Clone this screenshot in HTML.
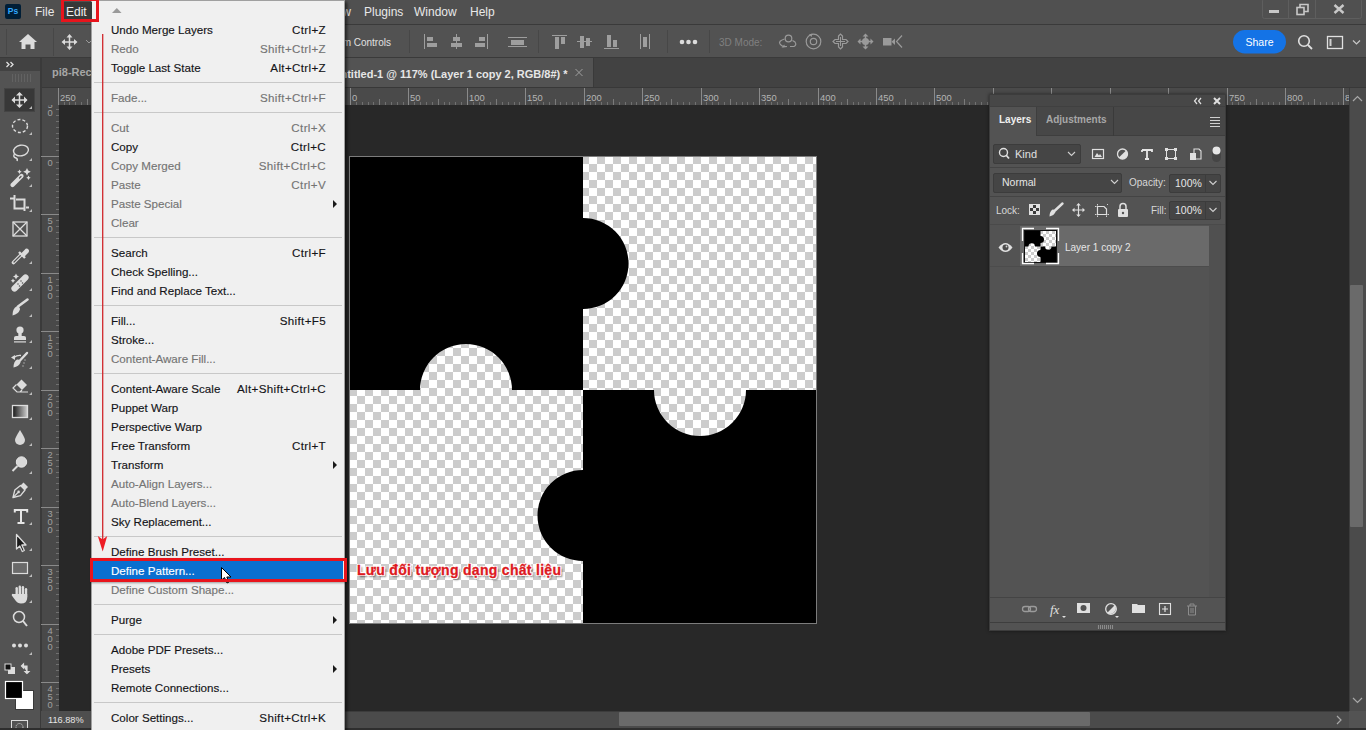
<!DOCTYPE html>
<html><head><meta charset="utf-8">
<style>
*{margin:0;padding:0;box-sizing:border-box}
html,body{width:1366px;height:730px;overflow:hidden;background:#282828;font-family:"Liberation Sans",sans-serif;position:relative}
.a{position:absolute}
svg{position:absolute;overflow:visible}
#menubar{left:0;top:0;width:1366px;height:25px;background:#505050;border-bottom:1px solid #3a3a3a}
#menubar span{position:absolute;top:5px;color:#e8e8e8;font-size:12px}
#opts{left:0;top:25px;width:1366px;height:33px;background:#525252;border-bottom:1px solid #3a3a3a}
#tabs{left:41px;top:58px;width:1325px;height:30px;background:#424242;border-bottom:1px solid #383838}
#tools{left:0;top:58px;width:41px;height:672px;background:#535353;border-right:1px solid #3d3d3d}
#hruler{left:41px;top:88px;width:1308px;height:17px;background:#4a4a4a}
#vruler{left:41px;top:105px;width:18px;height:606px;background:#494949}
#status{left:41px;top:711px;width:1325px;height:17px;background:#535353}
#vscroll{left:1349px;top:88px;width:17px;height:623px;background:#535353}
#menu{left:91px;top:0;width:254px;height:740px;background:#f0f0f0;box-shadow:inset 0 0 0 1px #a0a0a0,2px 2px 3px rgba(0,0,0,.6)}
.mi{position:absolute;left:20px;height:19px;line-height:19px;font-size:11.6px;color:#141418;white-space:nowrap;-webkit-text-stroke:.15px currentColor}
.sc{position:absolute;right:19px;height:19px;line-height:19px;font-size:11.6px;color:#141418;white-space:nowrap;text-align:right;letter-spacing:.35px;-webkit-text-stroke:.15px currentColor}
.dis{color:#747474}
.hlt{color:#fff}
.hl{position:absolute;left:2px;width:250px;height:19px;background:#0a6fd0}
.sep{position:absolute;left:3px;width:248px;height:1px;background:#c8c8c8}
.arr{position:absolute;right:8px;width:0;height:0;border-left:4px solid #1a1a1a;border-top:4px solid transparent;border-bottom:4px solid transparent}
.ic{stroke:#d6d6d6;fill:none;stroke-width:1.5}
.icf{fill:#d6d6d6}
.dim{fill:#8c8c8c}
</style></head><body>
<!-- window buttons -->
<svg width="1366" height="30" style="left:0;top:0;z-index:1">
  <rect x="1262.5" y="-1" width="99" height="19.5" rx="2" fill="none" stroke="#5e5e5e"/>
  <line x1="1288.5" y1="0" x2="1288.5" y2="18" stroke="#5e5e5e"/>
  <line x1="1315.5" y1="0" x2="1315.5" y2="18" stroke="#5e5e5e"/>
  <rect x="1269" y="10" width="10" height="3" fill="#c8c8c8"/>
  <rect x="1297" y="7.5" width="7" height="7" fill="none" stroke="#c8c8c8" stroke-width="1.6"/>
  <path d="M1300,7.5 V4.5 H1308 V11.5 H1304" fill="none" stroke="#c8c8c8" stroke-width="1.6"/>
  <path d="M1334.5,5 L1343.5,13 M1343.5,5 L1334.5,13" stroke="#c8c8c8" stroke-width="2.4"/>
</svg>

<div id="menubar" class="a">
  <div class="a" style="left:5px;top:4px;width:16px;height:15px;background:#001e36;border-radius:2px;color:#31a8ff;font:bold 8.5px 'Liberation Sans';line-height:15px;text-align:center">Ps</div>
  <span style="left:35px">File</span>
  <span style="left:66px">Edit</span>
  <span style="left:325px">View</span>
  <span style="left:364px">Plugins</span>
  <span style="left:414px">Window</span>
  <span style="left:470px">Help</span>
</div>
<div id="opts" class="a"></div>
<svg width="1366" height="60" style="left:0;top:0">
  <!-- left separators -->
  <line x1="6.5" y1="29" x2="6.5" y2="55" stroke="#474747"/>
  <line x1="53.5" y1="28" x2="53.5" y2="56" stroke="#474747"/>
  <!-- home -->
  <path d="M28,34 L37,42 H34.5 V49 H30.5 V44.5 H25.5 V49 H21.5 V42 H19 Z" fill="#dcdcdc"/>
  <!-- move tool -->
  <g stroke="#dcdcdc" stroke-width="1.5" fill="none">
    <line x1="69.5" y1="36" x2="69.5" y2="48"/><line x1="63.5" y1="42" x2="75.5" y2="42"/>
  </g>
  <path d="M69.5,34 L66.5,37.5 H72.5 Z M69.5,50 L66.5,46.5 H72.5 Z M61.5,42 L65,39 V45 Z M77.5,42 L74,39 V45 Z" fill="#dcdcdc"/>
  <path d="M86,40 L89,43 L92,40" stroke="#9a9a9a" fill="none"/>
  <!-- separators -->
  <line x1="409.5" y1="30" x2="409.5" y2="53" stroke="#474747"/>
  <line x1="538.5" y1="30" x2="538.5" y2="53" stroke="#474747"/>
  <line x1="667.5" y1="30" x2="667.5" y2="53" stroke="#474747"/>
  <line x1="709.5" y1="30" x2="709.5" y2="53" stroke="#474747"/>
  <g fill="#9e9e9e">
    <!-- align left -->
    <rect x="424" y="34" width="1" height="15"/><rect x="427" y="37" width="6" height="4"/><rect x="427" y="43" width="10" height="4"/>
    <!-- align h center -->
    <rect x="456" y="34" width="1" height="15"/><rect x="453" y="37" width="7" height="4"/><rect x="451" y="43" width="11" height="4"/>
    <!-- align right -->
    <rect x="487" y="34" width="1" height="15"/><rect x="479" y="37" width="6" height="4"/><rect x="475" y="43" width="10" height="4"/>
    <!-- distribute -->
    <rect x="508" y="37" width="19" height="1"/><rect x="511" y="40" width="13" height="5"/><rect x="508" y="46" width="19" height="1"/>
    <!-- top -->
    <rect x="552" y="35" width="15" height="1"/><rect x="555" y="37" width="4" height="12"/><rect x="561" y="37" width="4" height="7"/>
    <!-- v center -->
    <rect x="577" y="41" width="15" height="1"/><rect x="580" y="36" width="4" height="12"/><rect x="586" y="38" width="4" height="8"/>
    <!-- bottom -->
    <rect x="604" y="48" width="15" height="1"/><rect x="607" y="35" width="4" height="12"/><rect x="613" y="40" width="4" height="7"/>
    <!-- distribute h -->
    <rect x="640" y="34" width="1" height="15"/><rect x="643" y="37" width="4" height="10"/><rect x="649" y="34" width="1" height="15"/>
  </g>
  <g fill="#dcdcdc"><circle cx="682" cy="42" r="2.3"/><circle cx="688.5" cy="42" r="2.3"/><circle cx="695" cy="42" r="2.3"/></g>
  <text x="719" y="45.5" font-size="10" fill="#808080" font-family="Liberation Sans">3D Mode:</text>
  <g stroke="#9a9a9a" stroke-width="1.2" fill="none">
    <circle cx="788.5" cy="38.5" r="3.3"/>
    <path d="M784.5,39 Q778,41 780,44 Q782,47 787,46.5 M790,46.5 H794 Q797,45 795,42 L792.5,40.5"/>
    <circle cx="813.5" cy="41.5" r="7.3"/><circle cx="813.5" cy="41.5" r="3.2"/>
    <path d="M838.5,36 L840.5,34 L842.5,36 V39.5 H846 L848,41.5 L846,43.5 H842.5 V47 L840.5,49 L838.5,47 V43.5 H835 L833,41.5 L835,39.5 H838.5 Z"/>
    <path d="M840.5,37 V46 M836,41.5 H845" stroke-width="1"/>
    <path d="M902,35.5 L896.5,41.5 L902,47.5"/>
  </g>
  <g fill="#9a9a9a">
    <path d="M809,34.5 l3.5,-1 -1,3.5z"/>
    <path d="M865.5,33.5 l3,3 h-6 z M865.5,49.5 l3,-3 h-6 z M857.5,41.5 l3,-3 v6 z M873.5,41.5 l-3,-3 v6 z"/><circle cx="865.5" cy="41.5" r="3.5"/>
    <path d="M865.5,36 V47 M860,41.5 H871" stroke="#9a9a9a" stroke-width="1.5"/>
    <rect x="883" y="38" width="8.5" height="7.5"/><path d="M891.5,41.8 L895,38.5 V45 Z"/>
    <path d="M781.5,47.5 l3,-3 v3 z"/>
  </g>
  <!-- share -->
  <rect x="1233" y="30" width="53" height="23.5" rx="11.75" fill="#1473e6"/>
  <text x="1259.5" y="45.5" font-size="10.5" fill="#fff" text-anchor="middle" font-family="Liberation Sans">Share</text>
  <circle cx="1304" cy="41" r="5.3" fill="none" stroke="#e0e0e0" stroke-width="1.6"/>
  <line x1="1308" y1="45" x2="1312" y2="49" stroke="#e0e0e0" stroke-width="1.8"/>
  <rect x="1327.5" y="36.5" width="15" height="12" fill="none" stroke="#e0e0e0" stroke-width="1.3"/>
  <rect x="1329.5" y="39" width="2" height="7" fill="#d0d0d0"/>
  <path d="M1353,40.5 L1356.5,44 L1360,40.5" fill="none" stroke="#c8c8c8" stroke-width="1.2"/>
  <text x="391" y="45.5" font-size="10" fill="#e0e0e0" text-anchor="end" font-family="Liberation Sans">m Controls</text>
</svg>

<div id="tabs" class="a"></div>
<div id="tools" class="a"></div>
<div id="hruler" class="a"></div>
<div id="vruler" class="a"></div>
<div id="status" class="a"></div>
<div id="vscroll" class="a"></div>
<div class="a" style="left:0;top:58px;width:40px;height:13px;background:#424242"></div>
<svg width="100" height="100" style="left:0;top:0">
  <path d="M6.5,62 L9,64.5 L6.5,67 M10.5,62 L13,64.5 L10.5,67" stroke="#e0e0e0" stroke-width="1.3" fill="none"/>
  <g stroke="#626262" stroke-width="1">
    <line x1="12.5" y1="74" x2="12.5" y2="82"/><line x1="15.5" y1="74" x2="15.5" y2="82"/><line x1="18.5" y1="74" x2="18.5" y2="82"/>
    <line x1="21.5" y1="74" x2="21.5" y2="82"/><line x1="24.5" y1="74" x2="24.5" y2="82"/><line x1="27.5" y1="74" x2="27.5" y2="82"/><line x1="30.5" y1="74" x2="30.5" y2="82"/>
  </g>
</svg>
<div class="a" style="left:40px;top:58px;width:2px;height:672px;background:#3a3a3a"></div>
<div class="a" style="left:52px;top:66px;font:bold 11px 'Liberation Sans';color:#a6a6a6;white-space:nowrap">pi8-Rec</div>
<div class="a" style="left:300px;top:58px;width:294px;height:29px;background:#535353;border-left:1px solid #3a3a3a;border-right:1px solid #3a3a3a"></div>
<div class="a" style="left:332.5px;top:67.5px;font:bold 11px 'Liberation Sans';color:#e6e6e6;white-space:nowrap">Untitled-1 @ 117% (Layer 1 copy 2, RGB/8#) *</div>
<svg width="600" height="100" style="left:0;top:0"><path d="M575.5,69 L582.5,76 M582.5,69 L575.5,76" stroke="#a0a0a0" stroke-width="1"/></svg>

<div class="a" style="left:4px;top:88px;width:31px;height:24px;background:#383838;border:1px solid #444"></div>
<svg width="42" height="730" style="left:0;top:0">
 <g fill="#dcdcdc" stroke="none">
  <!-- corner triangles -->
  <path d="M32,106 V109 H29 Z M32,132 V135 H29 Z M32,158 V161 H29 Z M32,184 V187 H29 Z M32,209 V212 H29 Z M32,261 V264 H29 Z M32,288 V291 H29 Z M32,314 V317 H29 Z M32,340 V343 H29 Z M32,366 V369 H29 Z M32,392 V395 H29 Z M32,417 V420 H29 Z M32,443 V446 H29 Z M32,471 V474 H29 Z M32,497 V500 H29 Z M32,522 V525 H29 Z M32,548 V551 H29 Z M32,574 V577 H29 Z M32,600 V603 H29 Z M32,652 V655 H29 Z" fill="#bdbdbd"/>
 </g>
 <g stroke="#dcdcdc" fill="none" stroke-width="1.5">
  <!-- move -->
  <path d="M19.5,93 V107 M12.5,100 H26.5"/>
 </g>
 <path fill="#dcdcdc" d="M19.5,92 l-3.5,3.5 h7 z M19.5,108 l-3.5,-3.5 h7 z M11.5,100 l3.5,-3.5 v7 z M27.5,100 l-3.5,-3.5 v7 z"/>
 <!-- marquee -->
 <ellipse cx="20" cy="126" rx="7.5" ry="6.5" fill="none" stroke="#dcdcdc" stroke-width="1.4" stroke-dasharray="3 2"/>
 <!-- lasso -->
 <g fill="none" stroke="#dcdcdc" stroke-width="1.4">
  <ellipse cx="21" cy="150.5" rx="7.5" ry="5.3" transform="rotate(-10 21 150.5)"/>
  <path d="M14.5,154 q-2,3 1.5,4 q2,1 1,3"/>
 </g>
 <!-- magic wand -->
 <path d="M12.5,185 L21.5,176" stroke="#dcdcdc" stroke-width="4.2" stroke-linecap="round"/>
 <path d="M19.5,178 L21,176.5" stroke="#535353" stroke-width="1.2" stroke-linecap="round"/>
 <path d="M27,168 l1.2,2.6 2.6,1.2 -2.6,1.2 -1.2,2.6 -1.2,-2.6 -2.6,-1.2 2.6,-1.2z M28.5,175.5 l.8,1.4 1.4,.8 -1.4,.8 -.8,1.4 -.8,-1.4 -1.4,-.8 1.4,-.8z M19.5,169.5 l.8,1.4 1.4,.8 -1.4,.8 -.8,1.4 -.8,-1.4 -1.4,-.8 1.4,-.8z" fill="#dcdcdc"/>
 <!-- crop -->
 <path d="M10,198.5 H15 M14.5,195 V208.5 H24 M16,199.5 H24.5 V211 M26,207.5 H29" fill="none" stroke="#dcdcdc" stroke-width="2"/>
 <!-- frame -->
 <g fill="none" stroke="#dcdcdc" stroke-width="1.3"><rect x="13" y="222" width="14" height="14"/><path d="M13,222 L27,236 M27,222 L13,236"/></g>
 <!-- eyedropper -->
 <path d="M13.5,262.5 L21,255" stroke="#dcdcdc" stroke-width="3.6" fill="none" stroke-linecap="round"/>
 <path d="M14,262 L20.5,255.5" stroke="#535353" stroke-width="1.2" fill="none" stroke-linecap="round"/>
 <path d="M19,252 L25,258" stroke="#dcdcdc" stroke-width="2.4"/>
 <path d="M21.5,253 L24.5,250 Q26.5,247.5 28.5,249.5 Q30,251.5 27.5,253.5 L24.5,256.5 Z" fill="#dcdcdc"/>
 <!-- healing -->
 <path d="M14.5,288.5 L25.5,277.5" stroke="#dcdcdc" stroke-width="6.2" stroke-linecap="round"/>
 <path d="M16,273.5 l1,2 2,1 -2,1 -1,2 -1,-2 -2,-1 2,-1z M13,278.5 l.8,1.5 1.5,.8 -1.5,.8 -.8,1.5 -.8,-1.5 -1.5,-.8 1.5,-.8z" fill="#dcdcdc"/>
 <circle cx="18" cy="284" r=".75" fill="#535353"/><circle cx="21" cy="281" r=".75" fill="#535353"/><circle cx="19.5" cy="286" r=".75" fill="#535353"/><circle cx="22.5" cy="283" r=".75" fill="#535353"/>
 <!-- brush -->
 <path d="M18,306.5 L27.5,299.5" stroke="#dcdcdc" stroke-width="2.6" stroke-linecap="round"/>
 <path d="M12.5,315.5 Q12.5,308.5 16.5,306.5 Q20,306 20,309.5 Q18.5,314 12.5,315.5 Z" fill="#dcdcdc"/>
 <!-- stamp -->
 <circle cx="20" cy="330" r="3.6" fill="#dcdcdc"/><rect x="18.3" y="332" width="3.4" height="4" fill="#dcdcdc"/>
 <path d="M14,340 V337.5 Q14,336 16,336 H24 Q26,336 26,337.5 V340 Z" fill="#dcdcdc"/><rect x="14" y="341.3" width="12" height="1.2" fill="#dcdcdc"/>
 <!-- history brush -->
 <path d="M19.5,361 L27,353" stroke="#dcdcdc" stroke-width="2.4" stroke-linecap="round"/>
 <path d="M13.5,367.5 Q13.5,361.5 17,359.5 Q20.5,359 20.5,362.5 Q19,366.5 13.5,367.5 Z" fill="#dcdcdc"/>
 <path d="M14,357.5 Q17,355 21,355.5" stroke="#dcdcdc" stroke-width="1.3" fill="none"/><path d="M11,357.5 l4,-2.5 v5z" fill="#dcdcdc"/>
 <circle cx="25" cy="360" r=".7" fill="#bbb"/><circle cx="24" cy="363" r=".7" fill="#bbb"/><circle cx="23" cy="366" r=".7" fill="#bbb"/>
 <!-- eraser -->
 <path d="M16.5,384.5 L21.5,379.5 L27,385 L22,390 Z" fill="#dcdcdc"/>
 <path d="M16.5,384.5 L13,388 L17,392 H28 M22,390 L20,392" stroke="#dcdcdc" stroke-width="1.2" fill="none"/>
 <!-- gradient -->
 <defs><linearGradient id="gr" x1="0" y1="0" x2="1" y2="0"><stop offset="0" stop-color="#151515"/><stop offset="1" stop-color="#d0d0d0"/></linearGradient></defs>
 <rect x="12.5" y="405.5" width="15" height="12" fill="url(#gr)" stroke="#dcdcdc" stroke-width="1.3"/>
 <!-- blur drop -->
 <path d="M20,430 Q25,438 25,440 A5,5 0 0 1 15,440 Q15,438 20,430 Z" fill="#d8d8d8"/>
 <!-- dodge -->
 <circle cx="21.5" cy="462" r="5.2" fill="#d8d8d8" stroke="#e6e6e6"/><path d="M17.5,466 L12.5,471" stroke="#dcdcdc" stroke-width="2"/>
 <!-- pen -->
 <path d="M13,497.5 L14.8,490 L20.5,485.5 L25,490 L20.5,495.7 Z" fill="none" stroke="#dcdcdc" stroke-width="1.3" stroke-linejoin="round"/>
 <path d="M20.5,485.5 L23.5,482.5 L28,487 L25,490 Z" fill="#dcdcdc"/>
 <path d="M13,497.5 L18,492.5" stroke="#dcdcdc" stroke-width="1.1"/><circle cx="18.6" cy="491.9" r="1.3" fill="#dcdcdc"/>
 <!-- T -->
 <path d="M14.8,512.5 V510 H27.2 V512.5 M21,510 V523 M17.5,523 H24.5" stroke="#e6e6e6" stroke-width="2" fill="none"/>
 <!-- path select -->
 <path d="M16.5,534.5 L16.5,549 L19.8,546 L22.3,551.5 L24.3,550.5 L21.8,545 L26,545 Z" fill="#1a1a1a" stroke="#dcdcdc" stroke-width="1.3" stroke-linejoin="round"/>
 <!-- rectangle -->
 <rect x="12.5" y="562.5" width="15" height="11" fill="#6a6a6a" stroke="#dcdcdc" stroke-width="1.2"/>
 <!-- hand -->
 <g fill="#dcdcdc">
  <rect x="15.5" y="587" width="2.4" height="10" rx="1.2"/><rect x="18.6" y="585.5" width="2.4" height="11" rx="1.2"/><rect x="21.7" y="586" width="2.4" height="11" rx="1.2"/><rect x="24.8" y="588" width="2.4" height="10" rx="1.2"/>
  <path d="M15.5,594 H27.2 V598 Q27,603.5 21,603.5 Q17.5,603.5 15.5,600.5 L11.8,595.5 Q11.5,593.3 13.5,594 Z"/>
 </g>
 <!-- zoom -->
 <circle cx="19" cy="617" r="5.5" fill="none" stroke="#dcdcdc" stroke-width="1.5"/><path d="M23,621 L27,626" stroke="#dcdcdc" stroke-width="2"/>
 <!-- dots -->
 <circle cx="14" cy="645.5" r="2" fill="#dcdcdc"/><circle cx="20" cy="645.5" r="2" fill="#dcdcdc"/><circle cx="26" cy="645.5" r="2" fill="#dcdcdc"/>
 <!-- default colors -->
 <rect x="8" y="667" width="7" height="7" fill="#dcdcdc"/><rect x="5" y="664" width="6" height="6" fill="#111" stroke="#dcdcdc"/>
 <path d="M23,666 H27 V672 M21.5,666 l2,-2 v4z M27,673.5 l-2,-2 h4z" stroke="#dcdcdc" stroke-width="1.2" fill="#dcdcdc"/>
 <!-- swatches -->
 <rect x="15.5" y="690.5" width="18" height="19" fill="#fff" stroke="#3a3a3a"/>
 <rect x="5.5" y="681.5" width="17" height="17" fill="#000" stroke="#fff" stroke-width="1.2"/>
 <!-- quick mask -->
 <rect x="11.5" y="720.5" width="16" height="12" fill="none" stroke="#dcdcdc" stroke-width="1"/>
 <circle cx="19.5" cy="727" r="3.5" fill="none" stroke="#dcdcdc" stroke-dasharray="1 1"/>
</svg>

<svg width="1366" height="730" style="left:0;top:0;clip-path:inset(88px 17px 625px 41px)">
<line x1="58.5" y1="88" x2="58.5" y2="105" stroke="#8a8a8a" stroke-width="1"/>
<text x="60" y="101" fill="#b4b4b4" font-size="9.4" font-family="Liberation Sans">250</text>
<line x1="64.5" y1="102" x2="64.5" y2="105" stroke="#707070" stroke-width="1"/>
<line x1="69.5" y1="102" x2="69.5" y2="105" stroke="#707070" stroke-width="1"/>
<line x1="75.5" y1="102" x2="75.5" y2="105" stroke="#707070" stroke-width="1"/>
<line x1="81.5" y1="102" x2="81.5" y2="105" stroke="#707070" stroke-width="1"/>
<line x1="87.5" y1="99" x2="87.5" y2="105" stroke="#7a7a7a" stroke-width="1"/>
<line x1="93.5" y1="102" x2="93.5" y2="105" stroke="#707070" stroke-width="1"/>
<line x1="99.5" y1="102" x2="99.5" y2="105" stroke="#707070" stroke-width="1"/>
<line x1="105.5" y1="102" x2="105.5" y2="105" stroke="#707070" stroke-width="1"/>
<line x1="110.5" y1="102" x2="110.5" y2="105" stroke="#707070" stroke-width="1"/>
<line x1="116.5" y1="88" x2="116.5" y2="105" stroke="#8a8a8a" stroke-width="1"/>
<text x="118" y="101" fill="#b4b4b4" font-size="9.4" font-family="Liberation Sans">200</text>
<line x1="122.5" y1="102" x2="122.5" y2="105" stroke="#707070" stroke-width="1"/>
<line x1="128.5" y1="102" x2="128.5" y2="105" stroke="#707070" stroke-width="1"/>
<line x1="134.5" y1="102" x2="134.5" y2="105" stroke="#707070" stroke-width="1"/>
<line x1="140.5" y1="102" x2="140.5" y2="105" stroke="#707070" stroke-width="1"/>
<line x1="145.5" y1="99" x2="145.5" y2="105" stroke="#7a7a7a" stroke-width="1"/>
<line x1="151.5" y1="102" x2="151.5" y2="105" stroke="#707070" stroke-width="1"/>
<line x1="157.5" y1="102" x2="157.5" y2="105" stroke="#707070" stroke-width="1"/>
<line x1="163.5" y1="102" x2="163.5" y2="105" stroke="#707070" stroke-width="1"/>
<line x1="169.5" y1="102" x2="169.5" y2="105" stroke="#707070" stroke-width="1"/>
<line x1="175.5" y1="88" x2="175.5" y2="105" stroke="#8a8a8a" stroke-width="1"/>
<text x="177" y="101" fill="#b4b4b4" font-size="9.4" font-family="Liberation Sans">150</text>
<line x1="181.5" y1="102" x2="181.5" y2="105" stroke="#707070" stroke-width="1"/>
<line x1="186.5" y1="102" x2="186.5" y2="105" stroke="#707070" stroke-width="1"/>
<line x1="192.5" y1="102" x2="192.5" y2="105" stroke="#707070" stroke-width="1"/>
<line x1="198.5" y1="102" x2="198.5" y2="105" stroke="#707070" stroke-width="1"/>
<line x1="204.5" y1="99" x2="204.5" y2="105" stroke="#7a7a7a" stroke-width="1"/>
<line x1="210.5" y1="102" x2="210.5" y2="105" stroke="#707070" stroke-width="1"/>
<line x1="216.5" y1="102" x2="216.5" y2="105" stroke="#707070" stroke-width="1"/>
<line x1="221.5" y1="102" x2="221.5" y2="105" stroke="#707070" stroke-width="1"/>
<line x1="227.5" y1="102" x2="227.5" y2="105" stroke="#707070" stroke-width="1"/>
<line x1="233.5" y1="88" x2="233.5" y2="105" stroke="#8a8a8a" stroke-width="1"/>
<text x="235" y="101" fill="#b4b4b4" font-size="9.4" font-family="Liberation Sans">100</text>
<line x1="239.5" y1="102" x2="239.5" y2="105" stroke="#707070" stroke-width="1"/>
<line x1="245.5" y1="102" x2="245.5" y2="105" stroke="#707070" stroke-width="1"/>
<line x1="251.5" y1="102" x2="251.5" y2="105" stroke="#707070" stroke-width="1"/>
<line x1="256.5" y1="102" x2="256.5" y2="105" stroke="#707070" stroke-width="1"/>
<line x1="262.5" y1="99" x2="262.5" y2="105" stroke="#7a7a7a" stroke-width="1"/>
<line x1="268.5" y1="102" x2="268.5" y2="105" stroke="#707070" stroke-width="1"/>
<line x1="274.5" y1="102" x2="274.5" y2="105" stroke="#707070" stroke-width="1"/>
<line x1="280.5" y1="102" x2="280.5" y2="105" stroke="#707070" stroke-width="1"/>
<line x1="286.5" y1="102" x2="286.5" y2="105" stroke="#707070" stroke-width="1"/>
<line x1="292.5" y1="88" x2="292.5" y2="105" stroke="#8a8a8a" stroke-width="1"/>
<text x="294" y="101" fill="#b4b4b4" font-size="9.4" font-family="Liberation Sans">50</text>
<line x1="297.5" y1="102" x2="297.5" y2="105" stroke="#707070" stroke-width="1"/>
<line x1="303.5" y1="102" x2="303.5" y2="105" stroke="#707070" stroke-width="1"/>
<line x1="309.5" y1="102" x2="309.5" y2="105" stroke="#707070" stroke-width="1"/>
<line x1="315.5" y1="102" x2="315.5" y2="105" stroke="#707070" stroke-width="1"/>
<line x1="321.5" y1="99" x2="321.5" y2="105" stroke="#7a7a7a" stroke-width="1"/>
<line x1="327.5" y1="102" x2="327.5" y2="105" stroke="#707070" stroke-width="1"/>
<line x1="332.5" y1="102" x2="332.5" y2="105" stroke="#707070" stroke-width="1"/>
<line x1="338.5" y1="102" x2="338.5" y2="105" stroke="#707070" stroke-width="1"/>
<line x1="344.5" y1="102" x2="344.5" y2="105" stroke="#707070" stroke-width="1"/>
<line x1="350.5" y1="88" x2="350.5" y2="105" stroke="#8a8a8a" stroke-width="1"/>
<text x="352" y="101" fill="#b4b4b4" font-size="9.4" font-family="Liberation Sans">0</text>
<line x1="356.5" y1="102" x2="356.5" y2="105" stroke="#707070" stroke-width="1"/>
<line x1="362.5" y1="102" x2="362.5" y2="105" stroke="#707070" stroke-width="1"/>
<line x1="368.5" y1="102" x2="368.5" y2="105" stroke="#707070" stroke-width="1"/>
<line x1="373.5" y1="102" x2="373.5" y2="105" stroke="#707070" stroke-width="1"/>
<line x1="379.5" y1="99" x2="379.5" y2="105" stroke="#7a7a7a" stroke-width="1"/>
<line x1="385.5" y1="102" x2="385.5" y2="105" stroke="#707070" stroke-width="1"/>
<line x1="391.5" y1="102" x2="391.5" y2="105" stroke="#707070" stroke-width="1"/>
<line x1="397.5" y1="102" x2="397.5" y2="105" stroke="#707070" stroke-width="1"/>
<line x1="403.5" y1="102" x2="403.5" y2="105" stroke="#707070" stroke-width="1"/>
<line x1="408.5" y1="88" x2="408.5" y2="105" stroke="#8a8a8a" stroke-width="1"/>
<text x="410" y="101" fill="#b4b4b4" font-size="9.4" font-family="Liberation Sans">50</text>
<line x1="414.5" y1="102" x2="414.5" y2="105" stroke="#707070" stroke-width="1"/>
<line x1="420.5" y1="102" x2="420.5" y2="105" stroke="#707070" stroke-width="1"/>
<line x1="426.5" y1="102" x2="426.5" y2="105" stroke="#707070" stroke-width="1"/>
<line x1="432.5" y1="102" x2="432.5" y2="105" stroke="#707070" stroke-width="1"/>
<line x1="438.5" y1="99" x2="438.5" y2="105" stroke="#7a7a7a" stroke-width="1"/>
<line x1="444.5" y1="102" x2="444.5" y2="105" stroke="#707070" stroke-width="1"/>
<line x1="449.5" y1="102" x2="449.5" y2="105" stroke="#707070" stroke-width="1"/>
<line x1="455.5" y1="102" x2="455.5" y2="105" stroke="#707070" stroke-width="1"/>
<line x1="461.5" y1="102" x2="461.5" y2="105" stroke="#707070" stroke-width="1"/>
<line x1="467.5" y1="88" x2="467.5" y2="105" stroke="#8a8a8a" stroke-width="1"/>
<text x="469" y="101" fill="#b4b4b4" font-size="9.4" font-family="Liberation Sans">100</text>
<line x1="473.5" y1="102" x2="473.5" y2="105" stroke="#707070" stroke-width="1"/>
<line x1="479.5" y1="102" x2="479.5" y2="105" stroke="#707070" stroke-width="1"/>
<line x1="484.5" y1="102" x2="484.5" y2="105" stroke="#707070" stroke-width="1"/>
<line x1="490.5" y1="102" x2="490.5" y2="105" stroke="#707070" stroke-width="1"/>
<line x1="496.5" y1="99" x2="496.5" y2="105" stroke="#7a7a7a" stroke-width="1"/>
<line x1="502.5" y1="102" x2="502.5" y2="105" stroke="#707070" stroke-width="1"/>
<line x1="508.5" y1="102" x2="508.5" y2="105" stroke="#707070" stroke-width="1"/>
<line x1="514.5" y1="102" x2="514.5" y2="105" stroke="#707070" stroke-width="1"/>
<line x1="519.5" y1="102" x2="519.5" y2="105" stroke="#707070" stroke-width="1"/>
<line x1="525.5" y1="88" x2="525.5" y2="105" stroke="#8a8a8a" stroke-width="1"/>
<text x="527" y="101" fill="#b4b4b4" font-size="9.4" font-family="Liberation Sans">150</text>
<line x1="531.5" y1="102" x2="531.5" y2="105" stroke="#707070" stroke-width="1"/>
<line x1="537.5" y1="102" x2="537.5" y2="105" stroke="#707070" stroke-width="1"/>
<line x1="543.5" y1="102" x2="543.5" y2="105" stroke="#707070" stroke-width="1"/>
<line x1="549.5" y1="102" x2="549.5" y2="105" stroke="#707070" stroke-width="1"/>
<line x1="555.5" y1="99" x2="555.5" y2="105" stroke="#7a7a7a" stroke-width="1"/>
<line x1="560.5" y1="102" x2="560.5" y2="105" stroke="#707070" stroke-width="1"/>
<line x1="566.5" y1="102" x2="566.5" y2="105" stroke="#707070" stroke-width="1"/>
<line x1="572.5" y1="102" x2="572.5" y2="105" stroke="#707070" stroke-width="1"/>
<line x1="578.5" y1="102" x2="578.5" y2="105" stroke="#707070" stroke-width="1"/>
<line x1="584.5" y1="88" x2="584.5" y2="105" stroke="#8a8a8a" stroke-width="1"/>
<text x="586" y="101" fill="#b4b4b4" font-size="9.4" font-family="Liberation Sans">200</text>
<line x1="590.5" y1="102" x2="590.5" y2="105" stroke="#707070" stroke-width="1"/>
<line x1="595.5" y1="102" x2="595.5" y2="105" stroke="#707070" stroke-width="1"/>
<line x1="601.5" y1="102" x2="601.5" y2="105" stroke="#707070" stroke-width="1"/>
<line x1="607.5" y1="102" x2="607.5" y2="105" stroke="#707070" stroke-width="1"/>
<line x1="613.5" y1="99" x2="613.5" y2="105" stroke="#7a7a7a" stroke-width="1"/>
<line x1="619.5" y1="102" x2="619.5" y2="105" stroke="#707070" stroke-width="1"/>
<line x1="625.5" y1="102" x2="625.5" y2="105" stroke="#707070" stroke-width="1"/>
<line x1="631.5" y1="102" x2="631.5" y2="105" stroke="#707070" stroke-width="1"/>
<line x1="636.5" y1="102" x2="636.5" y2="105" stroke="#707070" stroke-width="1"/>
<line x1="642.5" y1="88" x2="642.5" y2="105" stroke="#8a8a8a" stroke-width="1"/>
<text x="644" y="101" fill="#b4b4b4" font-size="9.4" font-family="Liberation Sans">250</text>
<line x1="648.5" y1="102" x2="648.5" y2="105" stroke="#707070" stroke-width="1"/>
<line x1="654.5" y1="102" x2="654.5" y2="105" stroke="#707070" stroke-width="1"/>
<line x1="660.5" y1="102" x2="660.5" y2="105" stroke="#707070" stroke-width="1"/>
<line x1="666.5" y1="102" x2="666.5" y2="105" stroke="#707070" stroke-width="1"/>
<line x1="671.5" y1="99" x2="671.5" y2="105" stroke="#7a7a7a" stroke-width="1"/>
<line x1="677.5" y1="102" x2="677.5" y2="105" stroke="#707070" stroke-width="1"/>
<line x1="683.5" y1="102" x2="683.5" y2="105" stroke="#707070" stroke-width="1"/>
<line x1="689.5" y1="102" x2="689.5" y2="105" stroke="#707070" stroke-width="1"/>
<line x1="695.5" y1="102" x2="695.5" y2="105" stroke="#707070" stroke-width="1"/>
<line x1="701.5" y1="88" x2="701.5" y2="105" stroke="#8a8a8a" stroke-width="1"/>
<text x="703" y="101" fill="#b4b4b4" font-size="9.4" font-family="Liberation Sans">300</text>
<line x1="706.5" y1="102" x2="706.5" y2="105" stroke="#707070" stroke-width="1"/>
<line x1="712.5" y1="102" x2="712.5" y2="105" stroke="#707070" stroke-width="1"/>
<line x1="718.5" y1="102" x2="718.5" y2="105" stroke="#707070" stroke-width="1"/>
<line x1="724.5" y1="102" x2="724.5" y2="105" stroke="#707070" stroke-width="1"/>
<line x1="730.5" y1="99" x2="730.5" y2="105" stroke="#7a7a7a" stroke-width="1"/>
<line x1="736.5" y1="102" x2="736.5" y2="105" stroke="#707070" stroke-width="1"/>
<line x1="742.5" y1="102" x2="742.5" y2="105" stroke="#707070" stroke-width="1"/>
<line x1="747.5" y1="102" x2="747.5" y2="105" stroke="#707070" stroke-width="1"/>
<line x1="753.5" y1="102" x2="753.5" y2="105" stroke="#707070" stroke-width="1"/>
<line x1="759.5" y1="88" x2="759.5" y2="105" stroke="#8a8a8a" stroke-width="1"/>
<text x="761" y="101" fill="#b4b4b4" font-size="9.4" font-family="Liberation Sans">350</text>
<line x1="765.5" y1="102" x2="765.5" y2="105" stroke="#707070" stroke-width="1"/>
<line x1="771.5" y1="102" x2="771.5" y2="105" stroke="#707070" stroke-width="1"/>
<line x1="777.5" y1="102" x2="777.5" y2="105" stroke="#707070" stroke-width="1"/>
<line x1="782.5" y1="102" x2="782.5" y2="105" stroke="#707070" stroke-width="1"/>
<line x1="788.5" y1="99" x2="788.5" y2="105" stroke="#7a7a7a" stroke-width="1"/>
<line x1="794.5" y1="102" x2="794.5" y2="105" stroke="#707070" stroke-width="1"/>
<line x1="800.5" y1="102" x2="800.5" y2="105" stroke="#707070" stroke-width="1"/>
<line x1="806.5" y1="102" x2="806.5" y2="105" stroke="#707070" stroke-width="1"/>
<line x1="812.5" y1="102" x2="812.5" y2="105" stroke="#707070" stroke-width="1"/>
<line x1="818.5" y1="88" x2="818.5" y2="105" stroke="#8a8a8a" stroke-width="1"/>
<text x="820" y="101" fill="#b4b4b4" font-size="9.4" font-family="Liberation Sans">400</text>
<line x1="823.5" y1="102" x2="823.5" y2="105" stroke="#707070" stroke-width="1"/>
<line x1="829.5" y1="102" x2="829.5" y2="105" stroke="#707070" stroke-width="1"/>
<line x1="835.5" y1="102" x2="835.5" y2="105" stroke="#707070" stroke-width="1"/>
<line x1="841.5" y1="102" x2="841.5" y2="105" stroke="#707070" stroke-width="1"/>
<line x1="847.5" y1="99" x2="847.5" y2="105" stroke="#7a7a7a" stroke-width="1"/>
<line x1="853.5" y1="102" x2="853.5" y2="105" stroke="#707070" stroke-width="1"/>
<line x1="858.5" y1="102" x2="858.5" y2="105" stroke="#707070" stroke-width="1"/>
<line x1="864.5" y1="102" x2="864.5" y2="105" stroke="#707070" stroke-width="1"/>
<line x1="870.5" y1="102" x2="870.5" y2="105" stroke="#707070" stroke-width="1"/>
<line x1="876.5" y1="88" x2="876.5" y2="105" stroke="#8a8a8a" stroke-width="1"/>
<text x="878" y="101" fill="#b4b4b4" font-size="9.4" font-family="Liberation Sans">450</text>
<line x1="882.5" y1="102" x2="882.5" y2="105" stroke="#707070" stroke-width="1"/>
<line x1="888.5" y1="102" x2="888.5" y2="105" stroke="#707070" stroke-width="1"/>
<line x1="893.5" y1="102" x2="893.5" y2="105" stroke="#707070" stroke-width="1"/>
<line x1="899.5" y1="102" x2="899.5" y2="105" stroke="#707070" stroke-width="1"/>
<line x1="905.5" y1="99" x2="905.5" y2="105" stroke="#7a7a7a" stroke-width="1"/>
<line x1="911.5" y1="102" x2="911.5" y2="105" stroke="#707070" stroke-width="1"/>
<line x1="917.5" y1="102" x2="917.5" y2="105" stroke="#707070" stroke-width="1"/>
<line x1="923.5" y1="102" x2="923.5" y2="105" stroke="#707070" stroke-width="1"/>
<line x1="929.5" y1="102" x2="929.5" y2="105" stroke="#707070" stroke-width="1"/>
<line x1="934.5" y1="88" x2="934.5" y2="105" stroke="#8a8a8a" stroke-width="1"/>
<text x="936" y="101" fill="#b4b4b4" font-size="9.4" font-family="Liberation Sans">500</text>
<line x1="940.5" y1="102" x2="940.5" y2="105" stroke="#707070" stroke-width="1"/>
<line x1="946.5" y1="102" x2="946.5" y2="105" stroke="#707070" stroke-width="1"/>
<line x1="952.5" y1="102" x2="952.5" y2="105" stroke="#707070" stroke-width="1"/>
<line x1="958.5" y1="102" x2="958.5" y2="105" stroke="#707070" stroke-width="1"/>
<line x1="964.5" y1="99" x2="964.5" y2="105" stroke="#7a7a7a" stroke-width="1"/>
<line x1="969.5" y1="102" x2="969.5" y2="105" stroke="#707070" stroke-width="1"/>
<line x1="975.5" y1="102" x2="975.5" y2="105" stroke="#707070" stroke-width="1"/>
<line x1="981.5" y1="102" x2="981.5" y2="105" stroke="#707070" stroke-width="1"/>
<line x1="987.5" y1="102" x2="987.5" y2="105" stroke="#707070" stroke-width="1"/>
<line x1="993.5" y1="88" x2="993.5" y2="105" stroke="#8a8a8a" stroke-width="1"/>
<line x1="999.5" y1="102" x2="999.5" y2="105" stroke="#707070" stroke-width="1"/>
<line x1="1005.5" y1="102" x2="1005.5" y2="105" stroke="#707070" stroke-width="1"/>
<line x1="1010.5" y1="102" x2="1010.5" y2="105" stroke="#707070" stroke-width="1"/>
<line x1="1016.5" y1="102" x2="1016.5" y2="105" stroke="#707070" stroke-width="1"/>
<line x1="1022.5" y1="99" x2="1022.5" y2="105" stroke="#7a7a7a" stroke-width="1"/>
<line x1="1028.5" y1="102" x2="1028.5" y2="105" stroke="#707070" stroke-width="1"/>
<line x1="1034.5" y1="102" x2="1034.5" y2="105" stroke="#707070" stroke-width="1"/>
<line x1="1040.5" y1="102" x2="1040.5" y2="105" stroke="#707070" stroke-width="1"/>
<line x1="1045.5" y1="102" x2="1045.5" y2="105" stroke="#707070" stroke-width="1"/>
<line x1="1051.5" y1="88" x2="1051.5" y2="105" stroke="#8a8a8a" stroke-width="1"/>
<line x1="1057.5" y1="102" x2="1057.5" y2="105" stroke="#707070" stroke-width="1"/>
<line x1="1063.5" y1="102" x2="1063.5" y2="105" stroke="#707070" stroke-width="1"/>
<line x1="1069.5" y1="102" x2="1069.5" y2="105" stroke="#707070" stroke-width="1"/>
<line x1="1075.5" y1="102" x2="1075.5" y2="105" stroke="#707070" stroke-width="1"/>
<line x1="1080.5" y1="99" x2="1080.5" y2="105" stroke="#7a7a7a" stroke-width="1"/>
<line x1="1086.5" y1="102" x2="1086.5" y2="105" stroke="#707070" stroke-width="1"/>
<line x1="1092.5" y1="102" x2="1092.5" y2="105" stroke="#707070" stroke-width="1"/>
<line x1="1098.5" y1="102" x2="1098.5" y2="105" stroke="#707070" stroke-width="1"/>
<line x1="1104.5" y1="102" x2="1104.5" y2="105" stroke="#707070" stroke-width="1"/>
<line x1="1110.5" y1="88" x2="1110.5" y2="105" stroke="#8a8a8a" stroke-width="1"/>
<line x1="1116.5" y1="102" x2="1116.5" y2="105" stroke="#707070" stroke-width="1"/>
<line x1="1121.5" y1="102" x2="1121.5" y2="105" stroke="#707070" stroke-width="1"/>
<line x1="1127.5" y1="102" x2="1127.5" y2="105" stroke="#707070" stroke-width="1"/>
<line x1="1133.5" y1="102" x2="1133.5" y2="105" stroke="#707070" stroke-width="1"/>
<line x1="1139.5" y1="99" x2="1139.5" y2="105" stroke="#7a7a7a" stroke-width="1"/>
<line x1="1145.5" y1="102" x2="1145.5" y2="105" stroke="#707070" stroke-width="1"/>
<line x1="1151.5" y1="102" x2="1151.5" y2="105" stroke="#707070" stroke-width="1"/>
<line x1="1156.5" y1="102" x2="1156.5" y2="105" stroke="#707070" stroke-width="1"/>
<line x1="1162.5" y1="102" x2="1162.5" y2="105" stroke="#707070" stroke-width="1"/>
<line x1="1168.5" y1="88" x2="1168.5" y2="105" stroke="#8a8a8a" stroke-width="1"/>
<line x1="1174.5" y1="102" x2="1174.5" y2="105" stroke="#707070" stroke-width="1"/>
<line x1="1180.5" y1="102" x2="1180.5" y2="105" stroke="#707070" stroke-width="1"/>
<line x1="1186.5" y1="102" x2="1186.5" y2="105" stroke="#707070" stroke-width="1"/>
<line x1="1192.5" y1="102" x2="1192.5" y2="105" stroke="#707070" stroke-width="1"/>
<line x1="1197.5" y1="99" x2="1197.5" y2="105" stroke="#7a7a7a" stroke-width="1"/>
<line x1="1203.5" y1="102" x2="1203.5" y2="105" stroke="#707070" stroke-width="1"/>
<line x1="1209.5" y1="102" x2="1209.5" y2="105" stroke="#707070" stroke-width="1"/>
<line x1="1215.5" y1="102" x2="1215.5" y2="105" stroke="#707070" stroke-width="1"/>
<line x1="1221.5" y1="102" x2="1221.5" y2="105" stroke="#707070" stroke-width="1"/>
<line x1="1227.5" y1="88" x2="1227.5" y2="105" stroke="#8a8a8a" stroke-width="1"/>
<text x="1229" y="101" fill="#b4b4b4" font-size="9.4" font-family="Liberation Sans">750</text>
<line x1="1232.5" y1="102" x2="1232.5" y2="105" stroke="#707070" stroke-width="1"/>
<line x1="1238.5" y1="102" x2="1238.5" y2="105" stroke="#707070" stroke-width="1"/>
<line x1="1244.5" y1="102" x2="1244.5" y2="105" stroke="#707070" stroke-width="1"/>
<line x1="1250.5" y1="102" x2="1250.5" y2="105" stroke="#707070" stroke-width="1"/>
<line x1="1256.5" y1="99" x2="1256.5" y2="105" stroke="#7a7a7a" stroke-width="1"/>
<line x1="1262.5" y1="102" x2="1262.5" y2="105" stroke="#707070" stroke-width="1"/>
<line x1="1268.5" y1="102" x2="1268.5" y2="105" stroke="#707070" stroke-width="1"/>
<line x1="1273.5" y1="102" x2="1273.5" y2="105" stroke="#707070" stroke-width="1"/>
<line x1="1279.5" y1="102" x2="1279.5" y2="105" stroke="#707070" stroke-width="1"/>
<line x1="1285.5" y1="88" x2="1285.5" y2="105" stroke="#8a8a8a" stroke-width="1"/>
<text x="1287" y="101" fill="#b4b4b4" font-size="9.4" font-family="Liberation Sans">800</text>
<line x1="1291.5" y1="102" x2="1291.5" y2="105" stroke="#707070" stroke-width="1"/>
<line x1="1297.5" y1="102" x2="1297.5" y2="105" stroke="#707070" stroke-width="1"/>
<line x1="1303.5" y1="102" x2="1303.5" y2="105" stroke="#707070" stroke-width="1"/>
<line x1="1308.5" y1="102" x2="1308.5" y2="105" stroke="#707070" stroke-width="1"/>
<line x1="1314.5" y1="99" x2="1314.5" y2="105" stroke="#7a7a7a" stroke-width="1"/>
<line x1="1320.5" y1="102" x2="1320.5" y2="105" stroke="#707070" stroke-width="1"/>
<line x1="1326.5" y1="102" x2="1326.5" y2="105" stroke="#707070" stroke-width="1"/>
<line x1="1332.5" y1="102" x2="1332.5" y2="105" stroke="#707070" stroke-width="1"/>
<line x1="1338.5" y1="102" x2="1338.5" y2="105" stroke="#707070" stroke-width="1"/>
<line x1="1343.5" y1="88" x2="1343.5" y2="105" stroke="#8a8a8a" stroke-width="1"/>
<text x="1345" y="101" fill="#b4b4b4" font-size="9.4" font-family="Liberation Sans">850</text>
</svg><svg width="1366" height="730" style="left:0;top:0;clip-path:inset(105px 1307px 19px 41px)">
<line x1="56" y1="92.5" x2="59" y2="92.5" stroke="#707070" stroke-width="1"/>
<line x1="41" y1="98.5" x2="59" y2="98.5" stroke="#8a8a8a" stroke-width="1"/>
<text x="47.5" y="107.5" fill="#a0a0a0" font-size="9.3" font-family="Liberation Sans">5</text>
<text x="47.5" y="115.6" fill="#a0a0a0" font-size="9.3" font-family="Liberation Sans">0</text>
<line x1="56" y1="103.5" x2="59" y2="103.5" stroke="#707070" stroke-width="1"/>
<line x1="56" y1="109.5" x2="59" y2="109.5" stroke="#707070" stroke-width="1"/>
<line x1="56" y1="115.5" x2="59" y2="115.5" stroke="#707070" stroke-width="1"/>
<line x1="56" y1="121.5" x2="59" y2="121.5" stroke="#707070" stroke-width="1"/>
<line x1="56" y1="127.5" x2="59" y2="127.5" stroke="#707070" stroke-width="1"/>
<line x1="56" y1="133.5" x2="59" y2="133.5" stroke="#707070" stroke-width="1"/>
<line x1="56" y1="138.5" x2="59" y2="138.5" stroke="#707070" stroke-width="1"/>
<line x1="56" y1="144.5" x2="59" y2="144.5" stroke="#707070" stroke-width="1"/>
<line x1="56" y1="150.5" x2="59" y2="150.5" stroke="#707070" stroke-width="1"/>
<line x1="41" y1="156.5" x2="59" y2="156.5" stroke="#8a8a8a" stroke-width="1"/>
<text x="47.5" y="165.5" fill="#a0a0a0" font-size="9.3" font-family="Liberation Sans">0</text>
<line x1="56" y1="162.5" x2="59" y2="162.5" stroke="#707070" stroke-width="1"/>
<line x1="56" y1="168.5" x2="59" y2="168.5" stroke="#707070" stroke-width="1"/>
<line x1="56" y1="174.5" x2="59" y2="174.5" stroke="#707070" stroke-width="1"/>
<line x1="56" y1="179.5" x2="59" y2="179.5" stroke="#707070" stroke-width="1"/>
<line x1="56" y1="185.5" x2="59" y2="185.5" stroke="#707070" stroke-width="1"/>
<line x1="56" y1="191.5" x2="59" y2="191.5" stroke="#707070" stroke-width="1"/>
<line x1="56" y1="197.5" x2="59" y2="197.5" stroke="#707070" stroke-width="1"/>
<line x1="56" y1="203.5" x2="59" y2="203.5" stroke="#707070" stroke-width="1"/>
<line x1="56" y1="209.5" x2="59" y2="209.5" stroke="#707070" stroke-width="1"/>
<line x1="41" y1="214.5" x2="59" y2="214.5" stroke="#8a8a8a" stroke-width="1"/>
<text x="47.5" y="223.5" fill="#a0a0a0" font-size="9.3" font-family="Liberation Sans">5</text>
<text x="47.5" y="231.6" fill="#a0a0a0" font-size="9.3" font-family="Liberation Sans">0</text>
<line x1="56" y1="220.5" x2="59" y2="220.5" stroke="#707070" stroke-width="1"/>
<line x1="56" y1="226.5" x2="59" y2="226.5" stroke="#707070" stroke-width="1"/>
<line x1="56" y1="232.5" x2="59" y2="232.5" stroke="#707070" stroke-width="1"/>
<line x1="56" y1="238.5" x2="59" y2="238.5" stroke="#707070" stroke-width="1"/>
<line x1="56" y1="244.5" x2="59" y2="244.5" stroke="#707070" stroke-width="1"/>
<line x1="56" y1="250.5" x2="59" y2="250.5" stroke="#707070" stroke-width="1"/>
<line x1="56" y1="255.5" x2="59" y2="255.5" stroke="#707070" stroke-width="1"/>
<line x1="56" y1="261.5" x2="59" y2="261.5" stroke="#707070" stroke-width="1"/>
<line x1="56" y1="267.5" x2="59" y2="267.5" stroke="#707070" stroke-width="1"/>
<line x1="41" y1="273.5" x2="59" y2="273.5" stroke="#8a8a8a" stroke-width="1"/>
<text x="47.5" y="282.5" fill="#a0a0a0" font-size="9.3" font-family="Liberation Sans">1</text>
<text x="47.5" y="290.6" fill="#a0a0a0" font-size="9.3" font-family="Liberation Sans">0</text>
<text x="47.5" y="298.7" fill="#a0a0a0" font-size="9.3" font-family="Liberation Sans">0</text>
<line x1="56" y1="279.5" x2="59" y2="279.5" stroke="#707070" stroke-width="1"/>
<line x1="56" y1="285.5" x2="59" y2="285.5" stroke="#707070" stroke-width="1"/>
<line x1="56" y1="290.5" x2="59" y2="290.5" stroke="#707070" stroke-width="1"/>
<line x1="56" y1="296.5" x2="59" y2="296.5" stroke="#707070" stroke-width="1"/>
<line x1="56" y1="302.5" x2="59" y2="302.5" stroke="#707070" stroke-width="1"/>
<line x1="56" y1="308.5" x2="59" y2="308.5" stroke="#707070" stroke-width="1"/>
<line x1="56" y1="314.5" x2="59" y2="314.5" stroke="#707070" stroke-width="1"/>
<line x1="56" y1="320.5" x2="59" y2="320.5" stroke="#707070" stroke-width="1"/>
<line x1="56" y1="325.5" x2="59" y2="325.5" stroke="#707070" stroke-width="1"/>
<line x1="41" y1="331.5" x2="59" y2="331.5" stroke="#8a8a8a" stroke-width="1"/>
<text x="47.5" y="340.5" fill="#a0a0a0" font-size="9.3" font-family="Liberation Sans">1</text>
<text x="47.5" y="348.6" fill="#a0a0a0" font-size="9.3" font-family="Liberation Sans">5</text>
<text x="47.5" y="356.7" fill="#a0a0a0" font-size="9.3" font-family="Liberation Sans">0</text>
<line x1="56" y1="337.5" x2="59" y2="337.5" stroke="#707070" stroke-width="1"/>
<line x1="56" y1="343.5" x2="59" y2="343.5" stroke="#707070" stroke-width="1"/>
<line x1="56" y1="349.5" x2="59" y2="349.5" stroke="#707070" stroke-width="1"/>
<line x1="56" y1="355.5" x2="59" y2="355.5" stroke="#707070" stroke-width="1"/>
<line x1="56" y1="361.5" x2="59" y2="361.5" stroke="#707070" stroke-width="1"/>
<line x1="56" y1="366.5" x2="59" y2="366.5" stroke="#707070" stroke-width="1"/>
<line x1="56" y1="372.5" x2="59" y2="372.5" stroke="#707070" stroke-width="1"/>
<line x1="56" y1="378.5" x2="59" y2="378.5" stroke="#707070" stroke-width="1"/>
<line x1="56" y1="384.5" x2="59" y2="384.5" stroke="#707070" stroke-width="1"/>
<line x1="41" y1="390.5" x2="59" y2="390.5" stroke="#8a8a8a" stroke-width="1"/>
<text x="47.5" y="399.5" fill="#a0a0a0" font-size="9.3" font-family="Liberation Sans">2</text>
<text x="47.5" y="407.6" fill="#a0a0a0" font-size="9.3" font-family="Liberation Sans">0</text>
<text x="47.5" y="415.7" fill="#a0a0a0" font-size="9.3" font-family="Liberation Sans">0</text>
<line x1="56" y1="396.5" x2="59" y2="396.5" stroke="#707070" stroke-width="1"/>
<line x1="56" y1="401.5" x2="59" y2="401.5" stroke="#707070" stroke-width="1"/>
<line x1="56" y1="407.5" x2="59" y2="407.5" stroke="#707070" stroke-width="1"/>
<line x1="56" y1="413.5" x2="59" y2="413.5" stroke="#707070" stroke-width="1"/>
<line x1="56" y1="419.5" x2="59" y2="419.5" stroke="#707070" stroke-width="1"/>
<line x1="56" y1="425.5" x2="59" y2="425.5" stroke="#707070" stroke-width="1"/>
<line x1="56" y1="431.5" x2="59" y2="431.5" stroke="#707070" stroke-width="1"/>
<line x1="56" y1="437.5" x2="59" y2="437.5" stroke="#707070" stroke-width="1"/>
<line x1="56" y1="442.5" x2="59" y2="442.5" stroke="#707070" stroke-width="1"/>
<line x1="41" y1="448.5" x2="59" y2="448.5" stroke="#8a8a8a" stroke-width="1"/>
<text x="47.5" y="457.5" fill="#a0a0a0" font-size="9.3" font-family="Liberation Sans">2</text>
<text x="47.5" y="465.6" fill="#a0a0a0" font-size="9.3" font-family="Liberation Sans">5</text>
<text x="47.5" y="473.7" fill="#a0a0a0" font-size="9.3" font-family="Liberation Sans">0</text>
<line x1="56" y1="454.5" x2="59" y2="454.5" stroke="#707070" stroke-width="1"/>
<line x1="56" y1="460.5" x2="59" y2="460.5" stroke="#707070" stroke-width="1"/>
<line x1="56" y1="466.5" x2="59" y2="466.5" stroke="#707070" stroke-width="1"/>
<line x1="56" y1="472.5" x2="59" y2="472.5" stroke="#707070" stroke-width="1"/>
<line x1="56" y1="477.5" x2="59" y2="477.5" stroke="#707070" stroke-width="1"/>
<line x1="56" y1="483.5" x2="59" y2="483.5" stroke="#707070" stroke-width="1"/>
<line x1="56" y1="489.5" x2="59" y2="489.5" stroke="#707070" stroke-width="1"/>
<line x1="56" y1="495.5" x2="59" y2="495.5" stroke="#707070" stroke-width="1"/>
<line x1="56" y1="501.5" x2="59" y2="501.5" stroke="#707070" stroke-width="1"/>
<line x1="41" y1="507.5" x2="59" y2="507.5" stroke="#8a8a8a" stroke-width="1"/>
<text x="47.5" y="516.5" fill="#a0a0a0" font-size="9.3" font-family="Liberation Sans">3</text>
<text x="47.5" y="524.6" fill="#a0a0a0" font-size="9.3" font-family="Liberation Sans">0</text>
<text x="47.5" y="532.7" fill="#a0a0a0" font-size="9.3" font-family="Liberation Sans">0</text>
<line x1="56" y1="512.5" x2="59" y2="512.5" stroke="#707070" stroke-width="1"/>
<line x1="56" y1="518.5" x2="59" y2="518.5" stroke="#707070" stroke-width="1"/>
<line x1="56" y1="524.5" x2="59" y2="524.5" stroke="#707070" stroke-width="1"/>
<line x1="56" y1="530.5" x2="59" y2="530.5" stroke="#707070" stroke-width="1"/>
<line x1="56" y1="536.5" x2="59" y2="536.5" stroke="#707070" stroke-width="1"/>
<line x1="56" y1="542.5" x2="59" y2="542.5" stroke="#707070" stroke-width="1"/>
<line x1="56" y1="548.5" x2="59" y2="548.5" stroke="#707070" stroke-width="1"/>
<line x1="56" y1="553.5" x2="59" y2="553.5" stroke="#707070" stroke-width="1"/>
<line x1="56" y1="559.5" x2="59" y2="559.5" stroke="#707070" stroke-width="1"/>
<line x1="41" y1="565.5" x2="59" y2="565.5" stroke="#8a8a8a" stroke-width="1"/>
<text x="47.5" y="574.5" fill="#a0a0a0" font-size="9.3" font-family="Liberation Sans">3</text>
<text x="47.5" y="582.6" fill="#a0a0a0" font-size="9.3" font-family="Liberation Sans">5</text>
<text x="47.5" y="590.7" fill="#a0a0a0" font-size="9.3" font-family="Liberation Sans">0</text>
<line x1="56" y1="571.5" x2="59" y2="571.5" stroke="#707070" stroke-width="1"/>
<line x1="56" y1="577.5" x2="59" y2="577.5" stroke="#707070" stroke-width="1"/>
<line x1="56" y1="583.5" x2="59" y2="583.5" stroke="#707070" stroke-width="1"/>
<line x1="56" y1="588.5" x2="59" y2="588.5" stroke="#707070" stroke-width="1"/>
<line x1="56" y1="594.5" x2="59" y2="594.5" stroke="#707070" stroke-width="1"/>
<line x1="56" y1="600.5" x2="59" y2="600.5" stroke="#707070" stroke-width="1"/>
<line x1="56" y1="606.5" x2="59" y2="606.5" stroke="#707070" stroke-width="1"/>
<line x1="56" y1="612.5" x2="59" y2="612.5" stroke="#707070" stroke-width="1"/>
<line x1="56" y1="618.5" x2="59" y2="618.5" stroke="#707070" stroke-width="1"/>
<line x1="41" y1="624.5" x2="59" y2="624.5" stroke="#8a8a8a" stroke-width="1"/>
<text x="47.5" y="633.5" fill="#a0a0a0" font-size="9.3" font-family="Liberation Sans">4</text>
<text x="47.5" y="641.6" fill="#a0a0a0" font-size="9.3" font-family="Liberation Sans">0</text>
<text x="47.5" y="649.7" fill="#a0a0a0" font-size="9.3" font-family="Liberation Sans">0</text>
<line x1="56" y1="629.5" x2="59" y2="629.5" stroke="#707070" stroke-width="1"/>
<line x1="56" y1="635.5" x2="59" y2="635.5" stroke="#707070" stroke-width="1"/>
<line x1="56" y1="641.5" x2="59" y2="641.5" stroke="#707070" stroke-width="1"/>
<line x1="56" y1="647.5" x2="59" y2="647.5" stroke="#707070" stroke-width="1"/>
<line x1="56" y1="653.5" x2="59" y2="653.5" stroke="#707070" stroke-width="1"/>
<line x1="56" y1="659.5" x2="59" y2="659.5" stroke="#707070" stroke-width="1"/>
<line x1="56" y1="664.5" x2="59" y2="664.5" stroke="#707070" stroke-width="1"/>
<line x1="56" y1="670.5" x2="59" y2="670.5" stroke="#707070" stroke-width="1"/>
<line x1="56" y1="676.5" x2="59" y2="676.5" stroke="#707070" stroke-width="1"/>
<line x1="41" y1="682.5" x2="59" y2="682.5" stroke="#8a8a8a" stroke-width="1"/>
<text x="47.5" y="691.5" fill="#a0a0a0" font-size="9.3" font-family="Liberation Sans">4</text>
<text x="47.5" y="699.6" fill="#a0a0a0" font-size="9.3" font-family="Liberation Sans">5</text>
<text x="47.5" y="707.7" fill="#a0a0a0" font-size="9.3" font-family="Liberation Sans">0</text>
<line x1="56" y1="688.5" x2="59" y2="688.5" stroke="#707070" stroke-width="1"/>
<line x1="56" y1="694.5" x2="59" y2="694.5" stroke="#707070" stroke-width="1"/>
<line x1="56" y1="699.5" x2="59" y2="699.5" stroke="#707070" stroke-width="1"/>
<line x1="56" y1="705.5" x2="59" y2="705.5" stroke="#707070" stroke-width="1"/>
</svg>
<!-- vertical scrollbar -->
<div class="a" style="left:1349px;top:88px;width:17px;height:623px;background:#4b4b4b;border-left:1px solid #3c3c3c"></div>
<div class="a" style="left:1350px;top:285px;width:13px;height:242px;background:#6a6a6a;border-radius:1px"></div>
<svg width="1366" height="730" style="left:0;top:0">
  <path d="M1353,101 L1357.5,96.5 L1362,101" stroke="#a8a8a8" stroke-width="1.2" fill="none"/>
  <path d="M1353,698 L1357.5,702.5 L1362,698" stroke="#a8a8a8" stroke-width="1.2" fill="none"/>
</svg>
<!-- status + h scrollbar -->
<div class="a" style="left:41px;top:711px;width:1325px;height:17px;background:#4b4b4b;border-top:1px solid #3c3c3c"></div>
<div class="a" style="left:41px;top:711px;width:60px;height:17px;background:#4e4e4e"></div>
<div class="a" style="left:48px;top:715px;font:9.2px 'Liberation Sans';color:#e6e6e6">116.88%</div>
<div class="a" style="left:619px;top:712px;width:471px;height:14px;background:#6a6a6a;border-radius:1px"></div>
<div class="a" style="left:1349px;top:711px;width:17px;height:17px;background:#535353"></div>
<div class="a" style="left:0;top:728px;width:1366px;height:2px;background:#2e2e2e"></div>
<svg width="1366" height="730" style="left:0;top:0">
  <path d="M1337,716 L1341,720 L1337,724" stroke="#a8a8a8" stroke-width="1.2" fill="none"/>
</svg>

<!-- canvas -->
<svg width="1366" height="730" style="left:0;top:0">
  <defs>
    <pattern id="chk" x="349" y="156" width="16" height="16" patternUnits="userSpaceOnUse">
      <rect x="0" y="0" width="16" height="16" fill="#ffffff"/>
      <rect x="8" y="0" width="8" height="8" fill="#cccccc"/>
      <rect x="0" y="8" width="8" height="8" fill="#cccccc"/>
    </pattern>
  </defs>
  <rect x="349.5" y="156.5" width="467" height="467" fill="none" stroke="#7c7c7c" stroke-width="1"/>
  <rect x="350" y="157" width="466" height="466" fill="url(#chk)"/>
  <path d="M350,157 H583 V218 A45.5,45.5 0 0 1 583,309 V390 H512 A46,46 0 0 0 420,390 H350 Z" fill="#000"/>
  <path d="M583,390 H654 A46,46 0 0 0 746,390 H816 V623 H583 V561 A45.5,45.5 0 0 1 583,470 Z" fill="#000"/>
</svg>
<div class="a" style="left:357px;top:562px;font:bold 14px 'Liberation Sans';letter-spacing:.3px;color:#dd1a1f;-webkit-text-stroke:.3px #dd1a1f;white-space:nowrap;text-shadow:1px 0 #fff,-1px 0 #fff,0 1px #fff,0 -1px #fff,1px 1px #fff,-1px -1px #fff,1px -1px #fff,-1px 1px #fff,2px 2px 2px rgba(0,0,0,.55)">Lưu đối tượng dạng chất liệu</div>

<!-- Layers panel -->
<div class="a" style="left:989px;top:94px;width:237px;height:537px;background:#535353;border:1px solid #3c3c3c;box-shadow:0 0 3px rgba(0,0,0,.5)"></div>
<div class="a" style="left:990px;top:95px;width:235px;height:12px;background:#474747;border-bottom:1px solid #404040"></div>
<div class="a" style="left:990px;top:107px;width:235px;height:29px;background:#474747;border-bottom:1px solid #3e3e3e"></div>
<div class="a" style="left:990px;top:107px;width:47px;height:29px;background:#535353;border-right:1px solid #3e3e3e"></div>
<div class="a" style="left:1037px;top:107px;width:77px;height:29px;border-right:1px solid #3a3a3a"></div>
<div class="a" style="left:999px;top:114px;font:bold 10px 'Liberation Sans';color:#f0f0f0">Layers</div>
<div class="a" style="left:1046px;top:114px;font:bold 10px 'Liberation Sans';color:#a8a8a8">Adjustments</div>
<svg width="1366" height="730" style="left:0;top:0">
  <path d="M1197,98 L1194.5,101 L1197,104 M1201,98 L1198.5,101 L1201,104" stroke="#e0e0e0" stroke-width="1.2" fill="none"/>
  <path d="M1214,98 L1220,104 M1220,98 L1214,104" stroke="#e0e0e0" stroke-width="2"/>
  <path d="M1210,117.5 H1220 M1210,120.5 H1220 M1210,123.5 H1220 M1210,126.5 H1220" stroke="#d0d0d0" stroke-width="1"/>
</svg>
<!-- row 1: filter -->
<div class="a" style="left:993px;top:144px;width:88px;height:20px;background:#454545;border:1px solid #3c3c3c;border-radius:2px"></div>
<div class="a" style="left:1015px;top:148px;font:11px 'Liberation Sans';color:#e0e0e0">Kind</div>
<div class="a" style="left:990px;top:167px;width:235px;height:1px;background:#444"></div>
<!-- row 2: blend -->
<div class="a" style="left:993px;top:173px;width:129px;height:20px;background:#454545;border:1px solid #3c3c3c;border-radius:2px"></div>
<div class="a" style="left:1002px;top:176px;font:10.5px 'Liberation Sans';color:#e6e6e6">Normal</div>
<div class="a" style="left:1129px;top:177px;font:10px 'Liberation Sans';color:#d8d8d8">Opacity:</div>
<div class="a" style="left:1169px;top:174px;width:52px;height:19px;background:#454545;border:1px solid #3c3c3c;border-radius:2px"></div>
<div class="a" style="left:1205px;top:174px;width:1px;height:19px;background:#3c3c3c"></div>
<div class="a" style="left:1175px;top:177px;font:10.5px 'Liberation Sans';color:#e6e6e6">100%</div>
<div class="a" style="left:990px;top:196px;width:235px;height:1px;background:#444"></div>
<!-- row 3: lock -->
<div class="a" style="left:996px;top:205px;font:10px 'Liberation Sans';color:#d8d8d8">Lock:</div>
<div class="a" style="left:1151px;top:205px;font:10px 'Liberation Sans';color:#d8d8d8">Fill:</div>
<div class="a" style="left:1169px;top:201px;width:52px;height:19px;background:#454545;border:1px solid #3c3c3c;border-radius:2px"></div>
<div class="a" style="left:1205px;top:201px;width:1px;height:19px;background:#3c3c3c"></div>
<div class="a" style="left:1175px;top:204px;font:10.5px 'Liberation Sans';color:#e6e6e6">100%</div>
<div class="a" style="left:990px;top:224px;width:235px;height:1px;background:#4a4a4a"></div>
<!-- layer row -->
<div class="a" style="left:1020px;top:226px;width:189px;height:40px;background:#6a6a6a"></div>
<div class="a" style="left:990px;top:266px;width:219px;height:1px;background:#4c4c4c"></div>
<div class="a" style="left:1209px;top:225px;width:16px;height:372px;background:#505050"></div>
<div class="a" style="left:1065px;top:242px;font:10px 'Liberation Sans';color:#e6e6e6;white-space:nowrap">Layer 1 copy 2</div>
<svg width="1366" height="730" style="left:0;top:0">
  <!-- kind search icon -->
  <circle cx="1003.5" cy="152.5" r="4" fill="none" stroke="#e0e0e0" stroke-width="1.4"/><path d="M1006,155 L1009,158.5" stroke="#e0e0e0" stroke-width="1.8"/>
  <path d="M1068,152 L1071.5,155.5 L1075,152" stroke="#d0d0d0" fill="none" stroke-width="1.1"/>
  <path d="M1111,180 L1114.5,183.5 L1118,180" stroke="#d0d0d0" fill="none" stroke-width="1.1"/>
  <path d="M1209.5,181 L1213,184.5 L1216.5,181" stroke="#d0d0d0" fill="none" stroke-width="1.1"/>
  <path d="M1209.5,208 L1213,211.5 L1216.5,208" stroke="#d0d0d0" fill="none" stroke-width="1.1"/>
  <!-- filter icons -->
  <rect x="1092.5" y="149.5" width="11" height="9" fill="none" stroke="#e0e0e0" stroke-width="1.2"/>
  <path d="M1094.5,157 L1097,153 L1099,155.5 L1100,154 L1102,157 Z" fill="#e0e0e0"/>
  <circle cx="1122.5" cy="154" r="5" fill="none" stroke="#e0e0e0" stroke-width="1.3"/><path d="M1118.9,157.6 A5,5 0 0 0 1126.1,150.4 Z" fill="#e0e0e0"/>
  <path d="M1142,150 H1152 V152 M1142,150 V152 M1147,150 V159 M1145,159 H1149" stroke="#e6e6e6" stroke-width="1.8" fill="none"/>
  <rect x="1166.5" y="149.5" width="9" height="9" fill="none" stroke="#e0e0e0" stroke-width="1"/>
  <g fill="#e0e0e0"><rect x="1165" y="148" width="3" height="3"/><rect x="1174" y="148" width="3" height="3"/><rect x="1165" y="157" width="3" height="3"/><rect x="1174" y="157" width="3" height="3"/></g>
  <path d="M1194,149 H1199 L1201,151 V159 H1194 Z" fill="none" stroke="#e0e0e0" stroke-width="1.1"/><rect x="1190" y="153" width="6" height="7" fill="#e0e0e0"/>
  <rect x="1212" y="146" width="9" height="16" rx="4.5" fill="#454545"/><circle cx="1216.5" cy="150.5" r="4" fill="#e6e6e6"/>
  <!-- lock icons -->
  <rect x="1029.5" y="204.5" width="10" height="10" fill="#e0e0e0" stroke="#e0e0e0"/>
  <g fill="#3a3a3a"><rect x="1033" y="205" width="3" height="3"/><rect x="1030" y="208" width="3" height="3"/><rect x="1036" y="208" width="3" height="3"/><rect x="1033" y="211" width="3" height="3"/></g>
  <path d="M1055,210.5 L1062.5,203.5" stroke="#e0e0e0" stroke-width="2.4" stroke-linecap="round"/><path d="M1049.5,216.5 Q1049.5,211.5 1052.5,209.5 Q1055.5,209 1055.5,212 Q1054,215.5 1049.5,216.5 Z" fill="#e0e0e0"/>
  <path d="M1078.5,204.5 V215.5 M1073,210 H1084" stroke="#e0e0e0" stroke-width="1.2"/>
  <path d="M1078.5,203 l-2.3,2.5 h4.6z M1078.5,217 l-2.3,-2.5 h4.6z M1072,210 l2.5,-2.3 v4.6z M1085,210 l-2.5,-2.3 v4.6z" fill="#e0e0e0"/>
  <path d="M1097.5,206.5 H1104 L1106.5,209 V214.5 H1097.5 Z" fill="none" stroke="#e0e0e0" stroke-width="1.2"/>
  <path d="M1095,206.5 H1096.5 M1097.5,204 V205.5 M1095,214.5 H1096.5 M1097.5,215.5 V217 M1106.5,215.5 V217 M1107.5,214.5 H1109 M1107,205 L1108,204" stroke="#d0d0d0" stroke-width="1"/>
  <rect x="1118" y="209" width="10" height="8" rx="1" fill="#e0e0e0"/><path d="M1120,209 V206.5 A3,3 0 0 1 1126,206.5 V209" stroke="#e0e0e0" stroke-width="1.5" fill="none"/>
  <circle cx="1123" cy="213" r="1.2" fill="#535353"/>
  <!-- eye -->
  <path d="M998.5,247.5 Q1005.5,238.5 1012.5,247.5 Q1005.5,256.5 998.5,247.5 Z" fill="#e0e0e0"/><circle cx="1005.5" cy="247.5" r="3" fill="#4a4a4a"/><circle cx="1006.5" cy="246.5" r=".9" fill="#d0d0d0"/>
  <!-- thumbnail -->
  <defs>
    <pattern id="chk2" x="1025" y="231" width="6" height="6" patternUnits="userSpaceOnUse">
      <rect width="6" height="6" fill="#fff"/><rect x="3" width="3" height="3" fill="#ccc"/><rect y="3" width="3" height="3" fill="#ccc"/>
    </pattern>
  </defs>
  <rect x="1025" y="231" width="31" height="31" fill="url(#chk2)"/>
  <path d="M1025,231 H1040.5 V236 A3.2,3.2 0 0 1 1040.5,243 V246.5 H1035 A3.2,3.2 0 0 0 1028.5,246.5 H1025 Z" fill="#000"/>
  <path d="M1040.5,246.5 H1045 A3.2,3.2 0 0 0 1051.5,246.5 H1056 V262 H1040.5 V257 A3.2,3.2 0 0 1 1040.5,250 Z" fill="#000"/>
  <rect x="1024.5" y="230.5" width="32" height="32" fill="none" stroke="#111" stroke-width="1"/><path d="M1022.5,241 V228.5 H1034 M1046,228.5 H1058.5 V241 M1058.5,253 V263.5 H1046 M1034,263.5 H1022.5 V253" stroke="#fff" stroke-width="1.3" fill="none"/>
  <!-- footer -->
  <line x1="990" y1="597.5" x2="1225" y2="597.5" stroke="#444"/>
  <line x1="990" y1="622.5" x2="1225" y2="622.5" stroke="#3e3e3e"/>
  <g stroke="#8a8a8a" stroke-width="1.1"><path d="M1098.5,625 V629 M1100.5,625 V629 M1102.5,625 V629 M1104.5,625 V629 M1106.5,625 V629 M1108.5,625 V629 M1110.5,625 V629 M1112.5,625 V629"/></g>
  <g fill="none" stroke="#9a9a9a" stroke-width="1.3">
    <rect x="1022.5" y="606.5" width="8" height="5" rx="2.5"/><rect x="1028.5" y="606.5" width="8" height="5" rx="2.5"/>
  </g>
  <text x="1050" y="614" font-size="13" font-style="italic" font-family="Liberation Serif" fill="#e0e0e0">fx</text>
  <path d="M1062,616 l2,2 2,-2z M1115,616 l2,2 2,-2z" fill="#e0e0e0"/>
  <rect x="1077" y="603" width="13" height="10" fill="#e0e0e0"/><circle cx="1083.5" cy="608" r="3" fill="#535353"/>
  <circle cx="1111" cy="609" r="5.3" fill="none" stroke="#e0e0e0" stroke-width="1.3"/><path d="M1107.3,612.7 A5.3,5.3 0 0 0 1114.7,605.3 Z" fill="#e0e0e0"/>
  <path d="M1132,604 H1137 L1138,605 H1145 V613 H1132 Z" fill="#e0e0e0"/>
  <rect x="1159.5" y="603.5" width="11" height="11" fill="none" stroke="#e0e0e0" stroke-width="1.1"/><path d="M1165,606 V612 M1162,609 H1168" stroke="#e0e0e0" stroke-width="1.2"/>
  <path d="M1187,606 H1197 M1190,606 V604 H1194 V606 M1188.5,606 V615 H1195.5 V606 M1191,608 V613 M1193,608 V613" stroke="#8c8c8c" stroke-width="1" fill="none"/>
</svg>

<div id="menu" class="a">
<svg width="254" height="20" style="left:0;top:0"><path d="M21,13 L25.8,8 L30.6,13 Z" fill="#9a9a9a"/></svg>
<div class="mi" style="top:20px">Undo Merge Layers</div>
<div class="sc" style="top:20px">Ctrl+Z</div>
<div class="mi dis" style="top:39px">Redo</div>
<div class="sc dis" style="top:39px">Shift+Ctrl+Z</div>
<div class="mi" style="top:58px">Toggle Last State</div>
<div class="sc" style="top:58px">Alt+Ctrl+Z</div>
<div class="sep" style="top:82px"></div>
<div class="mi dis" style="top:88px">Fade...</div>
<div class="sc dis" style="top:88px">Shift+Ctrl+F</div>
<div class="sep" style="top:112px"></div>
<div class="mi dis" style="top:118px">Cut</div>
<div class="sc dis" style="top:118px">Ctrl+X</div>
<div class="mi" style="top:137px">Copy</div>
<div class="sc" style="top:137px">Ctrl+C</div>
<div class="mi dis" style="top:156px">Copy Merged</div>
<div class="sc dis" style="top:156px">Shift+Ctrl+C</div>
<div class="mi dis" style="top:175px">Paste</div>
<div class="sc dis" style="top:175px">Ctrl+V</div>
<div class="mi dis" style="top:194px">Paste Special</div>
<div class="arr" style="top:200px"></div>
<div class="mi dis" style="top:213px">Clear</div>
<div class="sep" style="top:237px"></div>
<div class="mi" style="top:243px">Search</div>
<div class="sc" style="top:243px">Ctrl+F</div>
<div class="mi" style="top:262px">Check Spelling...</div>
<div class="mi" style="top:281px">Find and Replace Text...</div>
<div class="sep" style="top:305px"></div>
<div class="mi" style="top:311px">Fill...</div>
<div class="sc" style="top:311px">Shift+F5</div>
<div class="mi" style="top:330px">Stroke...</div>
<div class="mi dis" style="top:349px">Content-Aware Fill...</div>
<div class="sep" style="top:373px"></div>
<div class="mi" style="top:379px">Content-Aware Scale</div>
<div class="sc" style="top:379px">Alt+Shift+Ctrl+C</div>
<div class="mi" style="top:398px">Puppet Warp</div>
<div class="mi" style="top:417px">Perspective Warp</div>
<div class="mi" style="top:436px">Free Transform</div>
<div class="sc" style="top:436px">Ctrl+T</div>
<div class="mi" style="top:455px">Transform</div>
<div class="arr" style="top:461px"></div>
<div class="mi dis" style="top:474px">Auto-Align Layers...</div>
<div class="mi dis" style="top:493px">Auto-Blend Layers...</div>
<div class="mi" style="top:512px">Sky Replacement...</div>
<div class="sep" style="top:536px"></div>
<div class="mi" style="top:542px">Define Brush Preset...</div>
<div class="hl" style="top:561px"></div>
<div class="mi hlt" style="top:561px">Define Pattern...</div>
<div class="mi dis" style="top:580px">Define Custom Shape...</div>
<div class="sep" style="top:604px"></div>
<div class="mi" style="top:610px">Purge</div>
<div class="arr" style="top:616px"></div>
<div class="sep" style="top:634px"></div>
<div class="mi" style="top:640px">Adobe PDF Presets...</div>
<div class="mi" style="top:659px">Presets</div>
<div class="arr" style="top:665px"></div>
<div class="mi" style="top:678px">Remote Connections...</div>
<div class="sep" style="top:702px"></div>
<div class="mi" style="top:708px">Color Settings...</div>
<div class="sc" style="top:708px">Shift+Ctrl+K</div>
</div>
<!-- Edit highlight + red box -->
<div class="a" style="left:62px;top:2px;width:30px;height:19px;background:#383838"></div>
<div class="a" style="left:66px;top:5px;font-size:12px;color:#f0f0f0">Edit</div>
<div class="a" style="left:61px;top:-2px;width:38px;height:24px;border:3px solid #e8141c"></div>
<!-- red arrow -->
<svg width="1366" height="730" style="left:0;top:0">
  <line x1="102.7" y1="34" x2="102.7" y2="540" stroke="#d0262c" stroke-width="1.3"/>
  <path d="M97.8,536 L102.7,539.5 L107.2,536 L102.7,551.5 Z" fill="#ee1c24"/>
  <!-- cursor -->
  <path d="M221.5,567.5 V580 L224.5,577.5 L227,583 L229,582 L226.8,577 L231,577 Z" fill="#fff" stroke="#000" stroke-width="1"/>
</svg>
<div class="a" style="left:90px;top:558px;width:257px;height:24px;border:3px solid #e8141c;box-shadow:1px 1px 2px rgba(0,0,0,.35)"></div>

</body></html>
